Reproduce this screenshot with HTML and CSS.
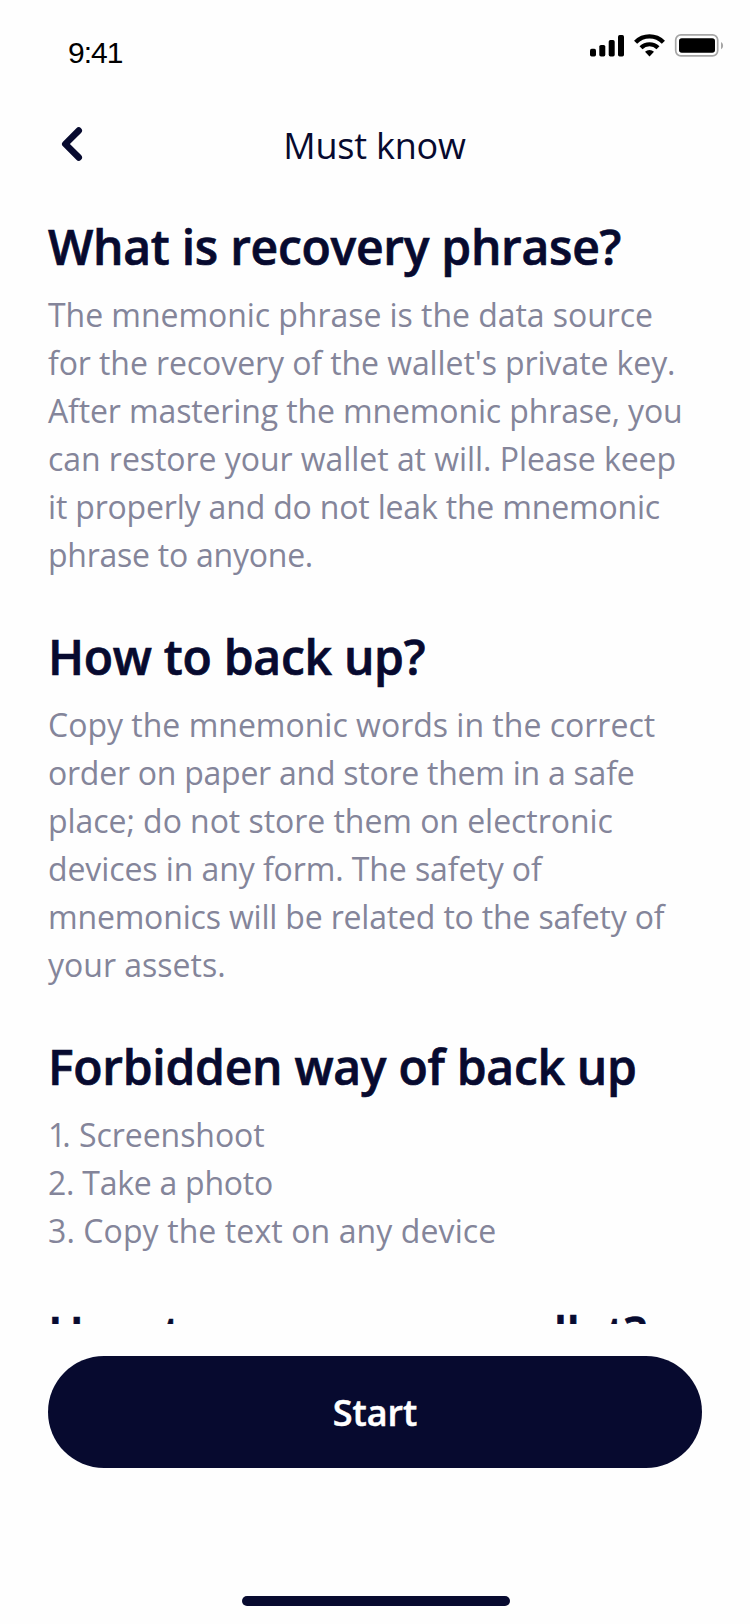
FILE: index.html
```html
<!DOCTYPE html>
<html lang="en">
<head>
<meta charset="utf-8">
<title>Must know</title>
<link rel="stylesheet" href="styles.css">
</head>
<body>
<div class="screen">
  <div class="status">
    <span class="time">9:41</span>
    <svg class="indicators" width="136" height="28" viewBox="0 0 136 28" aria-hidden="true">
      <rect x="2" y="16.7" width="6" height="7.8" rx="1.7"/>
      <rect x="11.3" y="12.9" width="6" height="11.6" rx="1.7"/>
      <rect x="20.7" y="8" width="6" height="16.5" rx="1.7"/>
      <rect x="30" y="3" width="6" height="21.5" rx="1.7"/>
      <path d="M47.6 10.2a19.6 19.6 0 0 1 27.8 0" fill="none" stroke="#000" stroke-width="4.4"/>
      <path d="M53 15.8a12 12 0 0 1 17 0" fill="none" stroke="#000" stroke-width="4.2"/>
      <path d="M61.5 24.4l-4.5-4.6a6.6 6.6 0 0 1 9 0z"/>
      <rect x="87.7" y="2.8" width="42" height="21" rx="5.2" fill="none" stroke="#a6a6a6" stroke-width="1.7"/>
      <rect x="91" y="6.3" width="36" height="14.5" rx="2.8"/>
      <path d="M133 10c2.8 1.3 2.8 6 0 7.2z" fill="#a6a6a6"/>
    </svg>
  </div>
  <header class="nav">
    <svg class="back" width="24" height="36" viewBox="0 0 24 36" aria-label="Back"><path d="M18.7 4.6L5.3 18l13.4 13.4" fill="none" stroke="#070a2f" stroke-width="6.6" stroke-linecap="round" stroke-linejoin="round"/></svg>
    <span class="title">Must know</span>
  </header>
  <main class="content">
    <section class="topic">
      <h2 class="heading">What is recovery phrase?</h2>
      <p class="copy"><span class="line t1">The mnemonic phrase is the data source</span> <span class="line t2">for the recovery of the wallet's private key.</span> <span class="line t3">After mastering the mnemonic phrase, you</span> <span class="line t1">can restore your wallet at will. Please keep</span> <span class="line t4">it properly and do not leak the mnemonic</span> <span class="line t5">phrase to anyone.</span></p>
    </section>
    <section class="topic">
      <h2 class="heading">How to back up?</h2>
      <p class="copy"><span class="line t0">Copy the mnemonic words in the correct</span> <span class="line t5">order on paper and store them in a safe</span> <span class="line t1">place; do not store them on electronic</span> <span class="line t2">devices in any form. The safety of</span> <span class="line t4">mnemonics will be related to the safety of</span> <span class="line t0">your assets.</span></p>
    </section>
    <section class="topic">
      <h2 class="heading">Forbidden way of back up</h2>
      <p class="copy"><span class="line t1"><span class="one">1</span>. Screenshoot</span> <span class="line t5">2. Take a photo</span> <span class="line wide">3. Copy the text on any device</span></p>
    </section>
    <section class="topic last">
      <h2 class="heading">How to recover my wallet?</h2>
    </section>
  </main>
  <footer class="footer">
    <button class="start">Start</button>
    <div class="home"></div>
  </footer>
</div>
</body>
</html>
```
FILE: styles.css
```css
* { box-sizing: border-box; }
body { margin: 0; background: #fefefe; color: #070a2f; font-family: "Open Sans", "Noto Sans", sans-serif; }
.screen { width: 750px; height: 1624px; display: flex; flex-direction: column; overflow: hidden; }
.status { height: 96px; display: flex; justify-content: space-between; align-items: flex-start; padding: 32px 26px 0 68px; }
.time { font: 30px/34px "Liberation Sans", sans-serif; letter-spacing: -1px; color: #000; padding-top: 4px; }
.nav { height: 96px; display: grid; grid-template-columns: 60px 1fr 60px; align-items: center; padding: 0 61px 0 60px; }
.back { display: block; }
.title { padding-top: 3px; font-size: 36px; line-height: 48px; letter-spacing: -.2px; text-align: center; }
.content { height: 1132px; padding: 22px 0 0 48px; overflow: hidden; }
.topic { margin-bottom: 45px; }
.heading { margin: 0 0 11px; font-size: 48px; font-weight: 600; line-height: 66px; letter-spacing: -.28px; white-space: nowrap; -webkit-text-stroke: .7px #070a2f; }
.last .heading { padding-top: 1px; letter-spacing: -.55px; }
.copy { margin: 0; font-size: 32px; line-height: 48px; color: #84859a; }
.line { display: block; white-space: nowrap; }
.t0 { letter-spacing: 0; }
.t1 { letter-spacing: -.05px; }
.t2 { letter-spacing: -.09px; }
.t3 { letter-spacing: -.13px; }
.t4 { letter-spacing: -.18px; }
.t5 { letter-spacing: -.25px; }
.wide { letter-spacing: .1px; }
.one { letter-spacing: -4px; }
.footer { flex: 1; display: flex; flex-direction: column; align-items: center; justify-content: space-between; padding: 32px 48px 18px; }
.start { width: 654px; height: 112px; border: 0; border-radius: 56px; background: #070a2f; color: #fff; font: 600 36px/48px "Open Sans", "Noto Sans", sans-serif; -webkit-text-stroke: .5px #fff; padding: 2px 0 0; }
.home { width: 268px; height: 10px; margin-left: 2px; border-radius: 5px; background: #070a2f; }
```
